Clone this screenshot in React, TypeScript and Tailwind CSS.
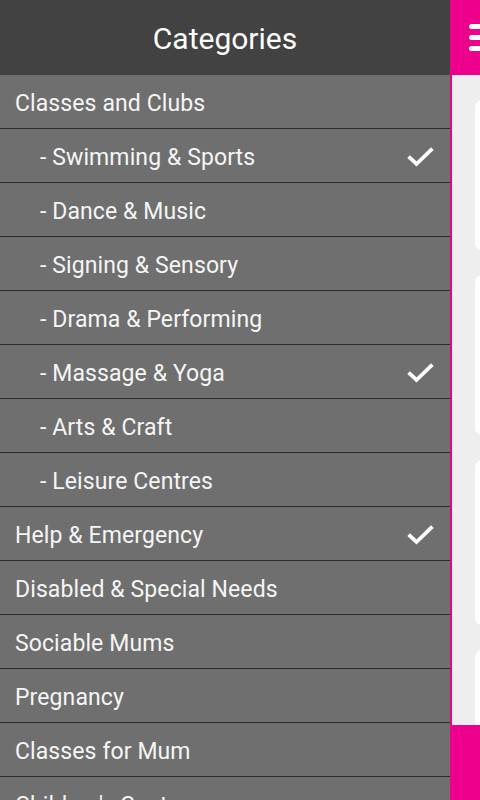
import { ReactNode } from "react";

type Item = { label: string; sub?: boolean; checked?: boolean };

const items: Item[] = [
  { label: "Classes and Clubs" },
  { label: "- Swimming & Sports", sub: true, checked: true },
  { label: "- Dance & Music", sub: true },
  { label: "- Signing & Sensory", sub: true },
  { label: "- Drama & Performing", sub: true },
  { label: "- Massage & Yoga", sub: true, checked: true },
  { label: "- Arts & Craft", sub: true },
  { label: "- Leisure Centres", sub: true },
  { label: "Help & Emergency", checked: true },
  { label: "Disabled & Special Needs" },
  { label: "Sociable Mums" },
  { label: "Pregnancy" },
  { label: "Classes for Mum" },
  { label: "Children's Centres" },
];

const Check = () => (
  <svg width="28" height="22" viewBox="0 0 28 22" className="-mt-[4px] shrink-0">
    <path d="M4 12 L10.5 18 L25 4" fill="none" stroke="#ffffff" strokeWidth="3.8" strokeLinecap="square" />
  </svg>
);

const Row = ({ item }: { item: Item }) => (
  <div
    className={`flex h-[54px] shrink-0 items-center justify-between border-b border-[#2b2b2b] bg-[#6f6f6f] pr-[16px] pt-[6px] ${
      item.sub ? "pl-[40px]" : "pl-[15px]"
    }`}
  >
    <span className="text-[23px] tracking-[0.1px] text-[#f5f5f5]">{item.label}</span>
    {item.checked && <Check />}
  </div>
);

const Card = ({ h, children }: { h: string; children?: ReactNode }) => (
  <div className={`${h} w-[60px] shrink-0 rounded-[7px] bg-white`}>{children}</div>
);

export default function App() {
  return (
    <div className="flex h-[800px] w-[480px] overflow-hidden bg-[#eeeeee]" style={{ fontFamily: "Roboto, 'Noto Sans', sans-serif" }}>
      <div className="flex w-[450px] shrink-0 flex-col">
        <div className="flex h-[75px] shrink-0 items-center justify-center bg-[#424242] pt-[2px]">
          <h1 className="text-[30px] text-white">Categories</h1>
        </div>
        {items.map((it) => (
          <Row key={it.label} item={it} />
        ))}
      </div>

      <div className="flex min-w-0 flex-1 flex-col">
        <div className="flex h-[75px] shrink-0 items-center bg-[#ec008c] pl-[19px]">
          <div className="flex flex-col gap-[6px]">
            <span className="block h-[5px] w-[20px] rounded-full bg-white" />
            <span className="block h-[5px] w-[20px] rounded-full bg-white" />
            <span className="block h-[5px] w-[20px] rounded-full bg-white" />
          </div>
        </div>
        <div className="flex flex-1 flex-col gap-[25px] overflow-hidden border-l-2 border-[#ec008c] bg-[#eeeeee] pl-[23px] pt-[25px]">
          <Card h="h-[150px]" />
          <Card h="h-[160px]" />
          <Card h="h-[165px]" />
          <Card h="h-[100px]" />
        </div>
        <div className="h-[75px] shrink-0 bg-[#ec008c]" />
      </div>
    </div>
  );
}
